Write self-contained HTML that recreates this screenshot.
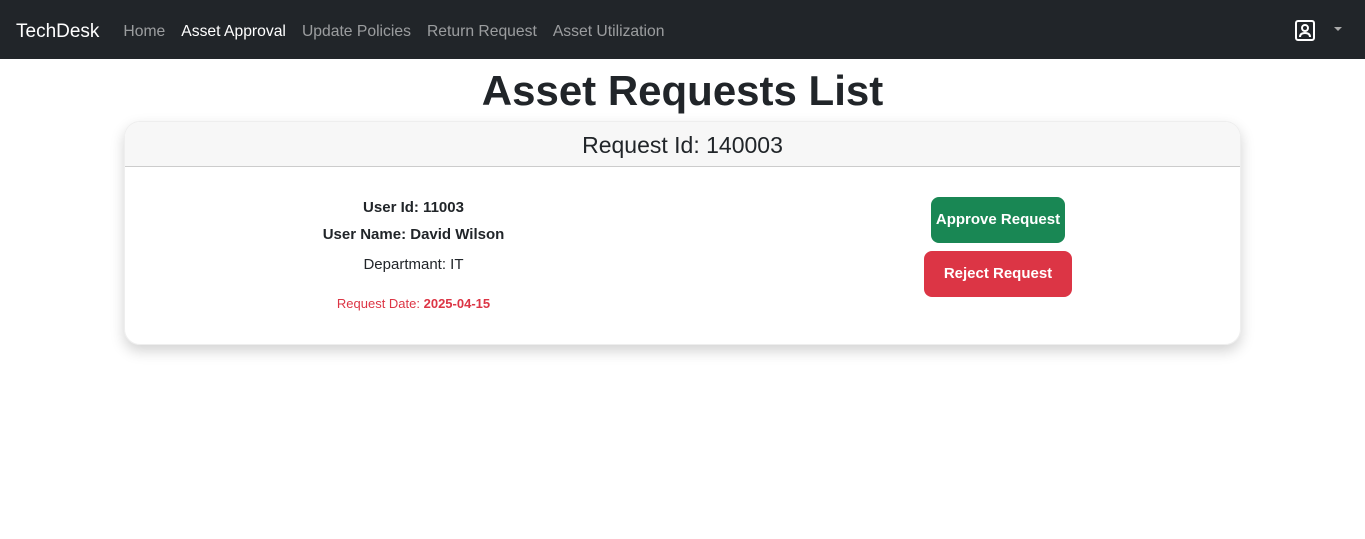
<!DOCTYPE html>
<html><head><style>
*{box-sizing:border-box;margin:0;padding:0}
body{width:1365px;height:539px;background:#fff;font-family:"Liberation Sans",sans-serif;color:#212529;overflow:hidden}
nav{height:59px;background:#212529;display:flex;align-items:center;padding:4px 16px 0;position:relative}
.brand{color:#fff;font-size:19px;margin-right:24px}
nav a{color:rgba(255,255,255,.55);font-size:15.7px;margin-right:16px;text-decoration:none}
nav a.act{color:#fff}
.user{position:absolute;left:1295px;top:20px}
.caret{position:absolute;left:1334px;top:27px;width:0;height:0;border-left:4px solid transparent;border-right:4px solid transparent;border-top:4px solid #aaa}
h1{text-align:center;font-size:42px;font-weight:bold;margin-top:9px;line-height:45px}
.card{position:absolute;left:124px;top:121px;width:1117px;height:224px;border-radius:16px;box-shadow:0 6px 14px rgba(0,0,0,.18);border:1px solid #eee;overflow:hidden}
.hd{height:45px;background:#f7f7f7;border-bottom:1px solid #ccc;text-align:center;font-size:23px;line-height:46px}
.info{position:absolute;left:0;width:577px;text-align:center;font-size:15px}
.btn{position:absolute;color:#fff;font-weight:bold;font-size:15px;border-radius:8px;text-align:center;line-height:46px;height:46px}
</style></head><body>
<nav><span class="brand">TechDesk</span><a>Home</a><a class="act">Asset Approval</a><a>Update Policies</a><a>Return Request</a><a>Asset Utilization</a>
<svg class="user" width="20" height="21" viewBox="0 0 20 21"><rect x="1" y="1" width="18" height="19" rx="2" fill="none" stroke="#fff" stroke-width="2"/><circle cx="10" cy="8" r="3" fill="none" stroke="#fff" stroke-width="2"/><path d="M5 17c0-3 2-4 5-4s5 1 5 4" fill="none" stroke="#fff" stroke-width="2"/></svg>
<span class="caret"></span></nav>
<h1>Asset Requests List</h1>
<div class="card"><div class="hd">Request Id: 140003</div>
<div class="info" style="top:77px;font-weight:bold">User Id: 11003</div>
<div class="info" style="top:104px;font-weight:bold">User Name: David Wilson</div>
<div class="info" style="top:134px">Departmant: IT</div>
<div class="info" style="top:174px;font-size:13px;color:#dc3545">Request Date: <b>2025-04-15</b></div>
<div class="btn" style="left:806px;top:75px;width:134px;background:#198754">Approve Request</div>
<div class="btn" style="left:799px;top:129px;width:148px;background:#dc3545">Reject Request</div>
</div>
</body></html>
